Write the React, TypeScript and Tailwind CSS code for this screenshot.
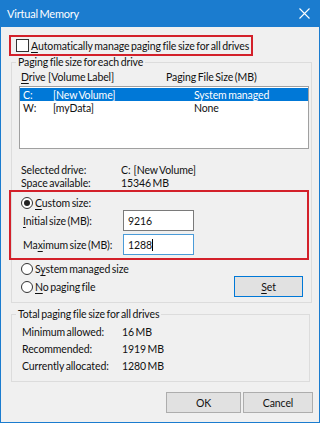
import React from 'react';

const font = { fontFamily: 'Lato, "Noto Sans", sans-serif' };

const U: React.FC<{ children: React.ReactNode }> = ({ children }) => <span className="underline underline-offset-[2px]">{children}</span>;

const Radio: React.FC<{ checked?: boolean }> = ({ checked }) => (
  <span className="w-[12px] h-[12px] rounded-full border border-[#333] bg-white flex items-center justify-center shrink-0">
    {checked && <span className="w-[6px] h-[6px] rounded-full bg-[#222]" />}
  </span>
);

export default function App() {
  return (
    <div
      className="w-[320px] h-[423px] bg-[#1b7ccf] flex flex-col text-[10.5px] tracking-[-0.1px] [word-spacing:-1px] text-[#111] leading-[12px] whitespace-nowrap"
      style={font}
    >
      {/* Title bar */}
      <div className="h-[27px] flex items-center justify-between pl-[7px] pr-[10px] text-white text-[11px] tracking-[-0.2px]">
        <span>Virtual Memory</span>
        <svg width="11" height="11" viewBox="0 0 11 11" stroke="white" strokeWidth="1.1">
          <path d="M0.5 0.5 L10.5 10.5 M10.5 0.5 L0.5 10.5" />
        </svg>
      </div>

      <div className="flex-1 mx-[1px] mb-[1px] bg-[#f0f0f0] flex flex-col">
        {/* Auto manage */}
        <div className="mt-[8px] ml-[8px] w-[244px] h-[21px] border-2 border-[#d3202a] flex items-center pl-[5px] gap-[2px]">
          <span className="w-[13px] h-[13px] border border-[#333] bg-white shrink-0" />
          <span>
            <U>A</U>utomatically manage paging file size for all drives
          </span>
        </div>

        {/* Group 1 */}
        <fieldset className="ml-[10px] w-[299px] border border-[#dcdcdc] pl-[7px] pr-[2px] pb-[5px]">
          <legend className="ml-[-3px] px-[2px] leading-[12px]">Paging file size for each drive</legend>
          <div className="mt-[2px] h-[14px] flex items-center pl-[2px]">
            <span className="w-[27px]">
              <U>D</U>rive
            </span>
            <span className="w-[118px]">[Volume Label]</span>
            <span>Paging File Size (MB)</span>
          </div>
          <div className="mt-[2px] h-[63px] border border-[#a0a0a0] bg-white pt-[1px]">
            <div className="h-[13px] bg-[#0078d7] text-white flex items-center pl-[3px]">
              <span className="w-[30px]">C:</span>
              <span className="w-[141px]">[New Volume]</span>
              <span>System managed</span>
            </div>
            <div className="h-[13px] flex items-center pl-[3px]">
              <span className="w-[30px]">W:</span>
              <span className="w-[141px]">[myData]</span>
              <span>None</span>
            </div>
          </div>

          <div className="mt-[15px] pl-[2px] leading-[13px]">
            <div className="flex">
              <span className="w-[100px]">Selected drive:</span>
              <span>C:&nbsp;&nbsp;[New Volume]</span>
            </div>
            <div className="flex">
              <span className="w-[100px]">Space available:</span>
              <span>15346 MB</span>
            </div>
          </div>

          {/* Custom size */}
          <div className="ml-[-10px] w-[300px] h-[70px] border-2 border-[#d3202a] flex flex-col">
            <div className="mt-[4px] h-[14px] flex items-center pl-[10px] gap-[2px]">
              <Radio checked />
              <span>
                <U>C</U>ustom size:
              </span>
            </div>
            <div className="h-[21px] flex items-center pl-[12px]">
              <span className="w-[100px]">
                <U>I</U>nitial size (MB):
              </span>
              <div className="w-[71px] h-[21px] border border-[#7a7a7a] bg-white flex items-center pl-[4px]">9216</div>
            </div>
            <div className="mt-[3px] h-[21px] flex items-center pl-[12px]">
              <span className="w-[100px]">
                Ma<U>x</U>imum size (MB):
              </span>
              <div className="w-[71px] h-[21px] border border-[#4a9bd8] bg-white flex items-center pl-[4px]">
                1288<span className="w-[1px] h-[12px] bg-black" />
              </div>
            </div>
          </div>

          <div className="mt-[2px] h-[14px] flex items-center pl-[2px] gap-[2px]">
            <Radio />
            <span>
              S<U>y</U>stem managed size
            </span>
          </div>
          <div className="h-[21px] flex items-center justify-between pl-[2px] pr-[6px]">
            <div className="flex items-center gap-[2px]">
              <Radio />
              <span>
                <U>N</U>o paging file
              </span>
            </div>
            <div className="w-[69px] h-[21px] border border-[#0078d7] bg-[#e1e1e1] flex items-center justify-center">
              <span>
                <U>S</U>et
              </span>
            </div>
          </div>
        </fieldset>

        {/* Group 2 */}
        <fieldset className="mt-[5px] ml-[10px] w-[299px] border border-[#dcdcdc] pl-[10px] pb-[6px]">
          <legend className="ml-[-6px] px-[2px] leading-[12px]">Total paging file size for all drives</legend>
          <div className="mt-[4px] leading-[17px]">
            <div className="flex">
              <span className="w-[100px]">Minimum allowed:</span>
              <span>16 MB</span>
            </div>
            <div className="flex">
              <span className="w-[100px]">Recommended:</span>
              <span>1919 MB</span>
            </div>
            <div className="flex">
              <span className="w-[100px]">Currently allocated:</span>
              <span>1280 MB</span>
            </div>
          </div>
        </fieldset>

        <div className="mt-[10px] flex justify-end gap-[2px] pr-[6px]">
          <div className="w-[75px] h-[21px] border border-[#adadad] bg-[#e1e1e1] flex items-center justify-center">OK</div>
          <div className="w-[70px] h-[21px] border border-[#adadad] bg-[#e1e1e1] flex items-center justify-center">Cancel</div>
        </div>
      </div>
    </div>
  );
}
